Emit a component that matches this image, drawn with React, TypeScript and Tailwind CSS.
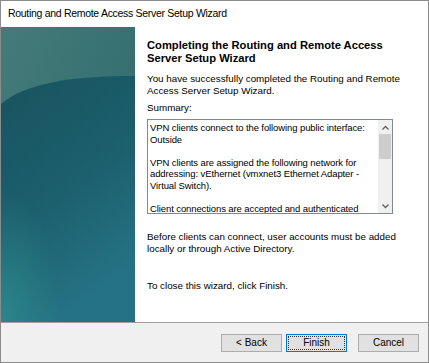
import React from 'react';

const SUMMARY = [
  'VPN clients connect to the following public interface:',
  'Outside',
  '',
  'VPN clients are assigned the following network for',
  'addressing: vEthernet (vmxnet3 Ethernet Adapter -',
  'Virtual Switch).',
  '',
  'Client connections are accepted and authenticated',
];

const SidePanel = () => (
  <div className="relative w-[134px] shrink-0 overflow-hidden bg-[#1d5b63]">
    <svg width="134" height="295" viewBox="0 0 134 295" className="absolute inset-0">
      <defs>
        <linearGradient id="top" x1="0" y1="0" x2="1" y2="1">
          <stop offset="0" stopColor="#457b7a" />
          <stop offset="1" stopColor="#2a676a" />
        </linearGradient>
        <linearGradient id="body" x1="0" y1="0" x2="0.4" y2="1">
          <stop offset="0" stopColor="#17535e" />
          <stop offset="0.55" stopColor="#1c5f6d" />
          <stop offset="1" stopColor="#257284" />
        </linearGradient>
        <radialGradient id="glow" cx="0" cy="1" r="0.45">
          <stop offset="0" stopColor="#2e8c8c" stopOpacity="0.8" />
          <stop offset="1" stopColor="#2e8c8c" stopOpacity="0" />
        </radialGradient>
      </defs>
      <rect width="134" height="295" fill="url(#top)" />
      <path d="M0 77 C25 56 70 49 134 49 L134 295 L0 295 Z" fill="url(#body)" />
      <rect width="134" height="295" fill="url(#glow)" />
    </svg>
  </div>
);

const Btn = ({ label, focused }: { label: string; focused?: boolean }) => (
  <button
    className={`h-[18px] w-[61px] bg-[#e1e1e1] text-[10px] leading-none text-black border ${
      focused ? 'border-[#0078d7]' : 'border-[#adadad]'
    } flex items-center justify-center`}
  >
    {focused ? (
      <span className="flex h-[14px] w-[57px] items-center justify-center border border-dotted border-[#333]">
        {label}
      </span>
    ) : (
      label
    )}
  </button>
);

export default function App() {
  return (
    <div
      className="flex h-[363px] w-[429px] flex-col border border-[#8c8c8c] bg-white text-black"
      style={{ fontFamily: '"Liberation Sans", Arial, sans-serif' }}
    >
      <div className="flex h-[26px] shrink-0 items-center pl-[7px] text-[10.5px] tracking-[-0.3px]">
        Routing and Remote Access Server Setup Wizard
      </div>

      <div className="flex h-[295px] shrink-0">
        <SidePanel />
        <div className="flex flex-col pl-[12px] pt-[12px] text-[9.8px] leading-[12px]">
          <h1 className="text-[11.2px] font-bold leading-[13px]">
            Completing the Routing and Remote Access
            <br />
            Server Setup Wizard
          </h1>
          <p className="mt-[8px]">
            You have successfully completed the Routing and Remote
            <br />
            Access Server Setup Wizard.
          </p>
          <p className="mt-[5px]">Summary:</p>
          <div className="mt-[5px] flex h-[95px] w-[246px] border border-[#828790] bg-white">
            <div className="flex-1 overflow-hidden pl-[2px] pt-[2px] text-[9.5px] leading-[11.5px] tracking-[-0.1px]">
              {SUMMARY.map((l, i) => (
                <div key={i} className="h-[11.5px] whitespace-nowrap">
                  {l}
                </div>
              ))}
            </div>
            <div className="flex w-[14px] flex-col bg-[#f0f0f0]">
              <div className="flex h-[14px] items-center justify-center">
                <svg width="7" height="5" viewBox="0 0 7 5">
                  <path d="M0.5 4.5 L3.5 1.5 L6.5 4.5" fill="none" stroke="#606060" strokeWidth="1.3" />
                </svg>
              </div>
              <div className="mx-[1px] h-[25px] bg-[#cdcdcd]" />
              <div className="flex-1" />
              <div className="flex h-[14px] items-center justify-center">
                <svg width="7" height="5" viewBox="0 0 7 5">
                  <path d="M0.5 0.5 L3.5 3.5 L6.5 0.5" fill="none" stroke="#606060" strokeWidth="1.3" />
                </svg>
              </div>
            </div>
          </div>
          <p className="mt-[17px]">
            Before clients can connect, user accounts must be added
            <br />
            locally or through Active Directory.
          </p>
          <p className="mt-[25px]">To close this wizard, click Finish.</p>
        </div>
      </div>

      <div className="flex flex-1 items-center justify-end border-t border-[#a0a0a0] bg-[#f0f0f0] pr-[9px] pt-[1px]">
        <Btn label="< Back" />
        <div className="w-[4px]" />
        <Btn label="Finish" focused />
        <div className="w-[11px]" />
        <Btn label="Cancel" />
      </div>
    </div>
  );
}
